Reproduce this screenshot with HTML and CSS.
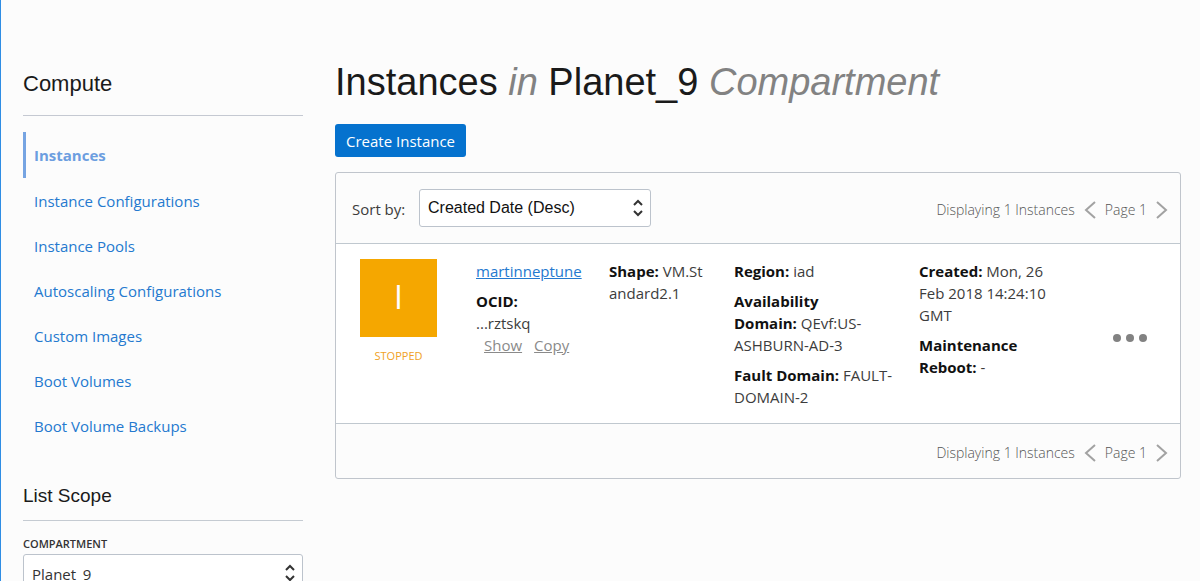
FILE: index.html
```html
<!DOCTYPE html>
<html lang="en">
<head>
<meta charset="utf-8">
<meta name="viewport" content="width=device-width, initial-scale=1">
<title>Instances</title>
<link rel="stylesheet" href="styles.css">
</head>
<body>
<div class="page">
  <aside class="sidebar">
    <h2 class="side-title">Compute</h2>
    <nav class="nav" aria-label="Compute">
      <a class="nav-link active" href="#" aria-current="page">Instances</a>
      <a class="nav-link" href="#">Instance Configurations</a>
      <a class="nav-link" href="#">Instance Pools</a>
      <a class="nav-link" href="#">Autoscaling Configurations</a>
      <a class="nav-link" href="#">Custom Images</a>
      <a class="nav-link" href="#">Boot Volumes</a>
      <a class="nav-link" href="#">Boot Volume Backups</a>
    </nav>
    <h3 class="scope-title">List Scope</h3>
    <label class="scope-label" for="compartment">COMPARTMENT</label>
    <div class="select scope-select">
      <select id="compartment"><option>Planet_9</option></select>
      <svg class="select-icon" width="12" height="18" viewBox="0 0 12 18" aria-hidden="true"><path d="M2 6l4-4 4 4M2 12l4 4 4-4"/></svg>
    </div>
  </aside>

  <main class="main">
    <h1 class="title">Instances <em>in</em> Planet_9 <em>Compartment</em></h1>
    <button class="create" type="button">Create Instance</button>

    <section class="panel">
      <div class="toolbar">
        <label class="sort-label" for="sort">Sort by:</label>
        <div class="select sort-select">
          <select id="sort"><option>Created Date (Desc)</option></select>
          <svg class="select-icon" width="12" height="18" viewBox="0 0 12 18" aria-hidden="true"><path d="M2 6l4-4 4 4M2 12l4 4 4-4"/></svg>
        </div>
        <div class="pager">
          <span>Displaying 1 Instances</span>
          <button class="page-btn" type="button" aria-label="Previous page"><svg width="12" height="20" viewBox="0 0 12 20"><path d="M11 2L2 10l9 8"/></svg></button>
          <span>Page 1</span>
          <button class="page-btn" type="button" aria-label="Next page"><svg width="12" height="20" viewBox="0 0 12 20"><path d="M1 2l9 8-9 8"/></svg></button>
        </div>
      </div>

      <article class="instance">
        <div class="status">
          <div class="status-tile">I</div>
          <div class="status-text">STOPPED</div>
        </div>
        <div class="cell">
          <p><a class="name" href="#">martinneptune</a></p>
          <p><b>OCID:</b><br>...rztskq<span class="ocid-links"><a href="#">Show</a><a href="#">Copy</a></span></p>
        </div>
        <div class="cell shape">
          <p><b>Shape:</b> VM.Standard2.1</p>
        </div>
        <div class="cell">
          <p><b>Region:</b> iad</p>
          <p><b>Availability<br>Domain:</b> QEvf:US-ASHBURN-AD-3</p>
          <p><b>Fault Domain:</b> FAULT-DOMAIN-2</p>
        </div>
        <div class="cell">
          <p><b>Created:</b> Mon, 26 Feb 2018 14:24:10 GMT</p>
          <p><b>Maintenance Reboot:</b> -</p>
        </div>
        <button class="more" type="button" aria-label="Actions"><svg width="34" height="8" viewBox="0 0 34 8"><circle cx="4" cy="4" r="4"/><circle cx="17" cy="4" r="4"/><circle cx="30" cy="4" r="4"/></svg></button>
      </article>

      <div class="footer">
        <div class="pager">
          <span>Displaying 1 Instances</span>
          <button class="page-btn" type="button" aria-label="Previous page"><svg width="12" height="20" viewBox="0 0 12 20"><path d="M11 2L2 10l9 8"/></svg></button>
          <span>Page 1</span>
          <button class="page-btn" type="button" aria-label="Next page"><svg width="12" height="20" viewBox="0 0 12 20"><path d="M1 2l9 8-9 8"/></svg></button>
        </div>
      </div>
    </section>
  </main>
</div>
</body>
</html>
```
FILE: styles.css
```css
* { box-sizing: border-box; }

body {
  margin: 0;
  background: #fcfcfc;
  color: #3c3c3c;
  font-family: "Open Sans", "Noto Sans", sans-serif;
  font-size: 15px;
  line-height: 22px;
}

h1, h2, h3, p { margin: 0; font-weight: 400; }
button, select { font: inherit; margin: 0; }

.page {
  display: grid;
  grid-template-columns: 280px minmax(0, 1fr);
  column-gap: 32px;
  min-height: 100vh;
  padding: 60px 19px 0 22px;
  border-left: 1px solid #2f8de4;
}

.side-title, .scope-title, .title {
  font-family: "Liberation Sans", Arial, sans-serif;
  color: #1a1a1a;
}

.side-title {
  padding: 11px 0 19px;
  border-bottom: 1px solid #c5c9d2;
  font-size: 22px;
  line-height: 25px;
}

.nav { margin-top: 16px; }

.nav-link {
  display: flex;
  align-items: center;
  height: 45px;
  padding-left: 11px;
  color: #2479cf;
  text-decoration: none;
}

.nav-link.active {
  height: 46px;
  padding-left: 8px;
  border-left: 3px solid #76a4e2;
  color: #6c9ee0;
  font-weight: 700;
}

.scope-title {
  margin-top: 38px;
  padding-bottom: 14px;
  border-bottom: 1px solid #c5cbd2;
  font-size: 19px;
  line-height: 20px;
}

.scope-label {
  display: block;
  margin-top: 15px;
  color: #333;
  font-size: 11px;
  font-weight: 600;
  line-height: 16px;
}

.select { position: relative; }

.select select {
  appearance: none;
  width: 100%;
  height: 38px;
  padding: 0 30px 0 8px;
  border: 1px solid #bcc3cc;
  border-radius: 3px;
  background: #fff;
  color: #333;
}

.select-icon {
  position: absolute;
  top: 10px;
  right: 7px;
  fill: none;
  stroke: #333;
  stroke-width: 2;
  pointer-events: none;
}

.scope-select { margin-top: 2px; }
.scope-select select { height: 40px; }

.title {
  font-size: 38px;
  line-height: 44px;
}

.title em { color: #828282; }

.create {
  display: block;
  height: 33px;
  margin: 20px 0 15px;
  padding: 0 11px;
  border: 0;
  border-radius: 3px;
  background: #0572ce;
  color: #fff;
}

.panel {
  border: 1px solid #c0c5cc;
  border-radius: 3px;
}

.toolbar {
  display: flex;
  align-items: center;
  min-height: 71px;
  padding: 0 12px 0 16px;
  border-bottom: 1px solid #c0c8cf;
}

.sort-label { width: 67px; padding-top: 2px; }
.sort-select { width: 232px; }

.sort-select select {
  font-family: "Liberation Sans", Arial, sans-serif;
  font-size: 16px;
  color: #111;
}

.pager {
  display: flex;
  align-items: center;
  gap: 9px;
  margin-left: auto;
  padding-top: 3px;
  color: #555;
  font-size: 14px;
  font-weight: 300;
}

.page-btn, .more {
  display: flex;
  padding: 0;
  border: 0;
  background: none;
}

.page-btn svg { fill: none; stroke: #a2a2a2; stroke-width: 2; }

.instance {
  display: grid;
  grid-template-columns: 92px 109fr 101fr 161fr 130fr 74px;
  column-gap: 24px;
  min-height: 180px;
  padding: 15px 33px 7px 24px;
  border-bottom: 1px solid #c0c8cf;
  background: #fff;
}

.status { width: 77px; text-align: center; }

.status-tile {
  height: 78px;
  background: #f5a700;
  color: #fff;
  font-size: 32px;
  line-height: 76px;
}

.status-text {
  margin-top: 8px;
  color: #f0a125;
  font-size: 11px;
}

.cell { padding-top: 1px; }
.cell p { margin-bottom: 8px; }
.cell b { color: #111; }
.shape { word-break: break-all; }
.name { color: #2479cf; }

.ocid-links {
  display: flex;
  gap: 12px;
  padding-left: 8px;
}

.ocid-links a { color: #8a8a8a; }

.more { align-self: center; justify-self: end; }
.more svg { fill: #828282; }

.footer {
  display: flex;
  align-items: center;
  min-height: 54px;
  padding: 0 12px 0 16px;
}
```
